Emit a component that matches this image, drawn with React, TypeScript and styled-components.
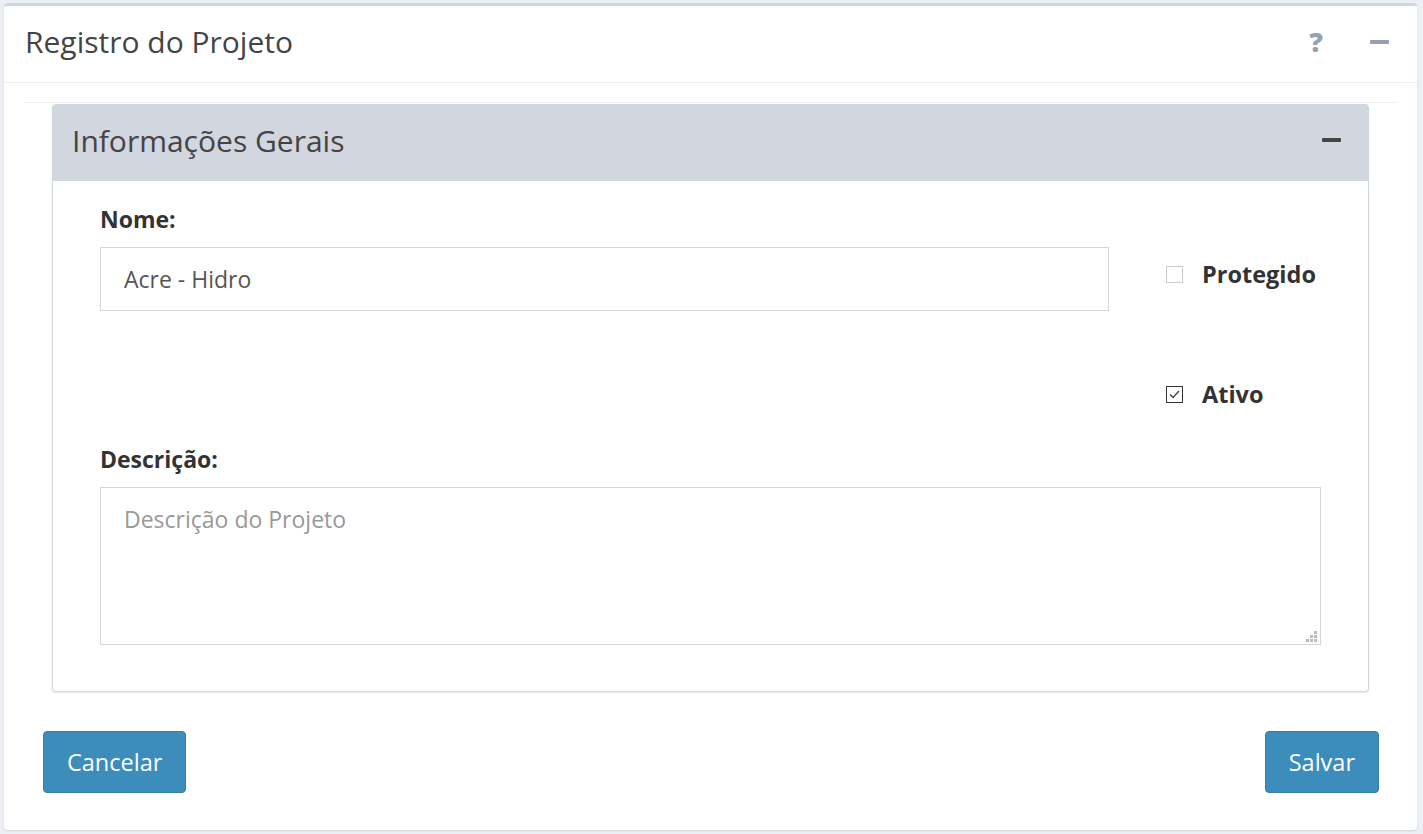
import styled, { createGlobalStyle } from "styled-components";

const GlobalStyle = createGlobalStyle`
  * { box-sizing: border-box; }
  body {
    margin: 0;
    background: #ecf0f5;
    font-family: "Open Sans", "Liberation Sans", sans-serif;
    color: #333;
  }
`;

const Page = styled.div`
  padding: 3px 6px 4px 4px;
  height: 834px;
`;

const Box = styled.div`
  background: #fff;
  border-top: 3px solid #d2d6de;
  border-radius: 4px;
  box-shadow: 0 1px 2px rgba(0, 0, 0, 0.12);
  height: 827px;
`;

const BoxHeader = styled.div`
  display: flex;
  align-items: center;
  justify-content: space-between;
  height: 77px;
  padding: 0 28px 4px 21px;
  border-bottom: 1px solid #f0f0f0;
`;

const Title = styled.h3`
  margin: 0;
  font-size: 30px;
  line-height: 36px;
  font-weight: 400;
  color: #444;
`;

const Tools = styled.div`
  display: flex;
  align-items: center;
  gap: 47px;
`;

const ToolButton = styled.span`
  color: #97a0b3;
  font-size: 27px;
  line-height: 30px;
  font-weight: 800;
  display: flex;
  align-items: center;
`;

const BoxBody = styled.div`
  padding: 19px 19px 0 20px;
`;

const Section = styled.div`
  border-top: 1px solid #f0f0f0;
  padding: 1px 29px 0 28px;
`;

const InnerBox = styled.div`
  border: 1px solid #d2d6de;
  border-top: none;
  border-radius: 4px;
  box-shadow: 0 1px 2px rgba(0, 0, 0, 0.1);
  overflow: hidden;
`;

const InnerHeader = styled.div`
  display: flex;
  align-items: center;
  justify-content: space-between;
  height: 77px;
  background: #d2d6de;
  padding: 0 27px 4px 19px;
`;

const InnerBody = styled.div`
  padding: 23px 47px 46px 47px;
`;

const Row = styled.div`
  display: flex;
  align-items: flex-start;
`;

const MainCol = styled.div`
  width: 1009px;
`;

const SideCol = styled.div`
  flex: 1;
  padding-left: 57px;
  padding-top: 58px;
  display: flex;
  flex-direction: column;
  gap: 96px;
`;

const Label = styled.label`
  display: block;
  font-size: 23px;
  line-height: 30px;
  font-weight: 700;
  color: #333;
  margin-bottom: 13px;
`;

const Input = styled.input`
  display: block;
  width: 100%;
  height: 64px;
  border: 1px solid #d2d6de;
  padding: 0 23px;
  font-family: inherit;
  font-size: 23px;
  color: #555;
  outline: none;
`;

const TextAreaWrap = styled.div`
  position: relative;
`;

const TextArea = styled.textarea`
  display: block;
  width: 100%;
  height: 158px;
  border: 1px solid #d2d6de;
  padding: 15px 23px;
  font-family: inherit;
  font-size: 23px;
  color: #555;
  resize: none;
  outline: none;
  &::placeholder {
    color: #999;
  }
`;

const Grip = styled.svg`
  position: absolute;
  right: 4px;
  bottom: 3px;
`;

const CheckRow = styled.label`
  display: flex;
  align-items: center;
  gap: 19px;
  font-size: 23.5px;
  line-height: 24px;
  font-weight: 700;
  color: #333;
  height: 24px;
`;

const CheckBox = styled.span<{ $checked?: boolean }>`
  width: 17px;
  height: 17px;
  border: 1px solid ${(p) => (p.$checked ? "#333" : "#ccc")};
  display: flex;
  align-items: center;
  justify-content: center;
  background: #fff;
`;

const DescGroup = styled.div`
  margin-top: 38px;
`;

const Footer = styled.div`
  display: flex;
  justify-content: space-between;
  padding: 39px 19px 0 19px;
`;

const Button = styled.button`
  height: 62px;
  padding: 0 23px;
  background: #3c8dbc;
  border: 1px solid #367fa9;
  border-radius: 4px;
  color: #fff;
  font-family: inherit;
  font-size: 23.5px;
`;

const Minus = ({ color }: { color: string }) => (
  <svg width="19" height="5" viewBox="0 0 19 5">
    <rect x="0" y="0" width="19" height="4" rx="1" fill={color} />
  </svg>
);

const App = () => (
  <>
    <GlobalStyle />
    <Page>
      <Box>
        <BoxHeader>
          <Title>Registro do Projeto</Title>
          <Tools>
            <ToolButton>?</ToolButton>
            <ToolButton>
              <Minus color="#97a0b3" />
            </ToolButton>
          </Tools>
        </BoxHeader>
        <BoxBody>
          <Section>
            <InnerBox>
              <InnerHeader>
                <Title>Informações Gerais</Title>
                <Minus color="#444" />
              </InnerHeader>
              <InnerBody>
                <Row>
                  <MainCol>
                    <Label>Nome:</Label>
                    <Input defaultValue="Acre - Hidro" />
                  </MainCol>
                  <SideCol>
                    <CheckRow>
                      <CheckBox />
                      Protegido
                    </CheckRow>
                    <CheckRow>
                      <CheckBox $checked>
                        <svg width="11" height="9" viewBox="0 0 11 9">
                          <path d="M1 4.5 L4 7.5 L10 1" fill="none" stroke="#444" strokeWidth="1.3" />
                        </svg>
                      </CheckBox>
                      Ativo
                    </CheckRow>
                  </SideCol>
                </Row>
                <DescGroup>
                  <Label>Descrição:</Label>
                  <TextAreaWrap>
                    <TextArea placeholder="Descrição do Projeto" />
                    <Grip width="11" height="11" viewBox="0 0 11 11">
                      <g fill="#bbb">
                        <rect x="8" y="0" width="3" height="3" />
                        <rect x="4" y="4" width="3" height="3" />
                        <rect x="8" y="4" width="3" height="3" />
                        <rect x="0" y="8" width="3" height="3" />
                        <rect x="4" y="8" width="3" height="3" />
                        <rect x="8" y="8" width="3" height="3" />
                      </g>
                    </Grip>
                  </TextAreaWrap>
                </DescGroup>
              </InnerBody>
            </InnerBox>
          </Section>
          <Footer>
            <Button>Cancelar</Button>
            <Button>Salvar</Button>
          </Footer>
        </BoxBody>
      </Box>
    </Page>
  </>
);

export default App;
